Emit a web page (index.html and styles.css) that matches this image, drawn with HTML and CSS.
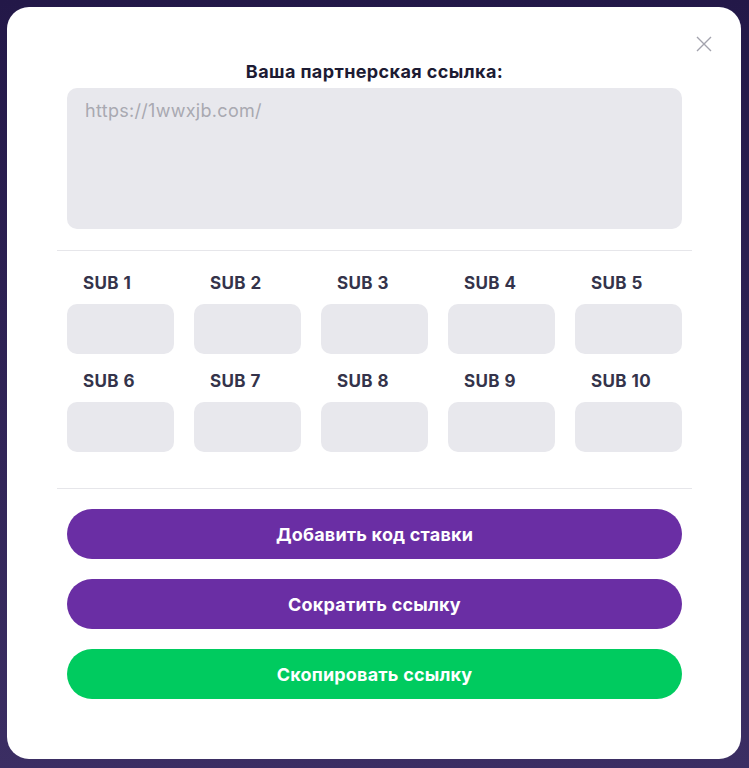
FILE: index.html
```html
<!DOCTYPE html>
<html lang="ru">
<head>
    <meta charset="UTF-8">
    <meta name="viewport" content="width=device-width, initial-scale=1.0">
    <title>Партнерская ссылка</title>
    <link rel="stylesheet" href="styles.css">
</head>
<body>
    <div class="modal">
        <button class="close-button" aria-label="Закрыть">
            <svg width="16" height="16" viewBox="0 0 16 16">
                <path d="M1 1L15 15M15 1L1 15" stroke="#a3a3ad" stroke-width="1.4" fill="none"/>
            </svg>
        </button>

        <h2 class="modal-title">Ваша партнерская ссылка:</h2>
        <textarea class="link-field" placeholder="https://1wwxjb.com/"></textarea>

        <hr class="divider">

        <div class="sub-grid">
            <label class="sub-field"><span>SUB 1</span><input type="text"></label>
            <label class="sub-field"><span>SUB 2</span><input type="text"></label>
            <label class="sub-field"><span>SUB 3</span><input type="text"></label>
            <label class="sub-field"><span>SUB 4</span><input type="text"></label>
            <label class="sub-field"><span>SUB 5</span><input type="text"></label>
            <label class="sub-field"><span>SUB 6</span><input type="text"></label>
            <label class="sub-field"><span>SUB 7</span><input type="text"></label>
            <label class="sub-field"><span>SUB 8</span><input type="text"></label>
            <label class="sub-field"><span>SUB 9</span><input type="text"></label>
            <label class="sub-field"><span>SUB 10</span><input type="text"></label>
        </div>

        <hr class="divider divider-bottom">

        <div class="actions">
            <button class="button button-purple">Добавить код ставки</button>
            <button class="button button-purple">Сократить ссылку</button>
            <button class="button button-green">Скопировать ссылку</button>
        </div>
    </div>
</body>
</html>
```

FILE: styles.css
```css
* {
    margin: 0;
    padding: 0;
    box-sizing: border-box;
    font-family: 'Inter', 'Noto Sans', sans-serif;
}

body {
    background: linear-gradient(to bottom, #231848, #3b2e63);
    min-height: 768px;
    padding: 7px 8px 9px 7px;
}

/* Modal */
.modal {
    position: relative;
    background-color: #fff;
    border-radius: 22px;
    height: 752px;
    padding: 55px 59px 60px 60px;
}

.close-button {
    position: absolute;
    top: 29px;
    right: 29px;
    width: 16px;
    height: 16px;
    background: none;
    border: none;
    cursor: pointer;
}

.close-button svg {
    display: block;
}

.modal-title {
    text-align: center;
    font-size: 18px;
    letter-spacing: 0.4px;
    line-height: 20px;
    font-weight: 700;
    color: #1d1b33;
    margin-bottom: 6px;
}

.link-field {
    display: block;
    width: 100%;
    height: 141px;
    border: none;
    border-radius: 10px;
    background-color: #e8e8ed;
    padding: 12px 18px;
    font-size: 18px;
    letter-spacing: 0.3px;
    resize: none;
    outline: none;
}

.link-field::placeholder {
    color: #a9a9b1;
}

.divider {
    border: none;
    border-top: 1px solid #e6e6ea;
    margin: 21px -10px 23px;
}

.divider-bottom {
    margin: 36px -10px 20px;
}

/* SUB fields */
.sub-grid {
    display: grid;
    grid-template-columns: repeat(5, 1fr);
    column-gap: 20px;
    row-gap: 18px;
}

.sub-field {
    display: flex;
    flex-direction: column;
    gap: 12px;
}

.sub-field span {
    padding-left: 16px;
    font-size: 17px;
    letter-spacing: 0.4px;
    line-height: 18px;
    font-weight: 700;
    color: #34334a;
}

.sub-field input {
    width: 100%;
    height: 50px;
    border: none;
    border-radius: 10px;
    background-color: #e8e8ed;
    outline: none;
}

/* Buttons */
.actions {
    display: flex;
    flex-direction: column;
    gap: 20px;
}

.button {
    height: 50px;
    border: none;
    border-radius: 25px;
    color: #fff;
    font-size: 18px;
    letter-spacing: 0.2px;
    font-weight: 700;
    cursor: pointer;
}

.button-purple {
    background-color: #6a2ea4;
}

.button-green {
    background-color: #00cb5f;
}
```
